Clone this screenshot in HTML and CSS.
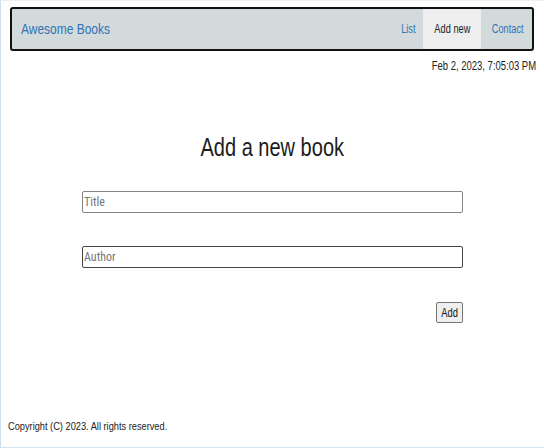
FILE: index.html
```html
<!DOCTYPE html>
<html>
<head>
<meta charset="utf-8">
<link rel="stylesheet" href="styles.css">
</head>
<body>
<header class="topbar">
  <nav class="navbar">
    <a class="brand" href="#"><span class="sq">Awesome Books</span></a>
    <ul class="links">
      <li><a class="link" href="#"><span class="sq">List</span></a></li>
      <li><a class="link active" href="#"><span class="sq">Add new</span></a></li>
      <li><a class="link" href="#"><span class="sq">Contact</span></a></li>
    </ul>
  </nav>
  <p class="date"><span class="sq">Feb 2, 2023, 7:05:03 PM</span></p>
</header>
<main class="content">
  <h1 class="title"><span class="sq">Add a new book</span></h1>
  <form class="form">
    <input class="field" type="text" placeholder="Title">
    <input class="field dark" type="text" placeholder="Author">
    <div class="actions"><button class="btn" type="button"><span class="sq">Add</span></button></div>
  </form>
</main>
<footer class="footer"><span class="sq">Copyright (C) 2023. All rights reserved.</span></footer>
</body>
</html>
```
FILE: styles.css
```css
* { box-sizing: border-box; }
html, body { margin: 0; padding: 0; }
body {
  font-family: "Liberation Sans", Arial, sans-serif;
  color: #222;
  background: #fff;
  width: 544px;
  height: 448px;
  display: flex;
  flex-direction: column;
  border-left: 1px solid #cddff1;
  border-top: 1px solid #eeeeee;
  border-bottom: 1px solid #d3e2f1;
}
.sq {
  display: inline-block;
  white-space: nowrap;
  transform: scaleX(0.78);
  transform-origin: center center;
}
.topbar { padding: 6px 10px 0 9px; }
.navbar {
  display: flex;
  align-items: stretch;
  justify-content: space-between;
  height: 44px;
  background: #d3dadc;
  border: 2px solid #111;
  border-radius: 3px;
}
.brand {
  align-self: center;
  padding-left: 9px;
  color: #2f73b5;
  text-decoration: none;
  font-size: 14px;
}
.brand .sq { transform: scaleX(0.855); transform-origin: left center; }
.links {
  list-style: none;
  display: flex;
  margin: 0;
  padding: 0;
}
.links li { display: flex; }
.link {
  display: flex;
  align-items: center;
  padding: 0 10px;
  font-size: 12px;
  color: #2f73b5;
  text-decoration: none;
}
.link .sq { transform: scaleX(0.77); margin: 0 -5px; }
.links li:nth-child(2) .link { padding: 0 10px 0 11px; }
.links li:last-child .link { padding: 0 9px 0 11px; }
.link.active { background: #eeeeee; color: #222; }
.date {
  margin: 8px -2px 0 0;
  text-align: right;
  font-size: 12px;
  color: #222;
}
.date .sq { transform: scaleX(0.79); transform-origin: right center; }
.content { flex: 1; display: flex; flex-direction: column; align-items: center; }
.title {
  margin: 59px 0 0;
  font-weight: normal;
  font-size: 26px;
  color: #1c1c1c;
}
.title .sq { transform: scaleX(0.77); }
.form {
  width: 381px;
  display: flex;
  flex-direction: column;
  margin-top: 28px;
}
.field {
  height: 22px;
  border: 1px solid #858585;
  border-radius: 2px;
  padding: 0 1px;
  font-family: "Roboto", "Liberation Sans", sans-serif;
  font-stretch: condensed;
  font-size: 12px;
  margin-bottom: 33px;
}
.field.dark { border-color: #444; margin-bottom: 34px; }
.field::placeholder { color: #777; }
.actions { display: flex; justify-content: flex-end; }
.btn {
  width: 27px;
  height: 21px;
  padding: 0;
  font-family: inherit;
  font-size: 12px;
  background: #efefef;
  border: 1px solid #767676;
  border-radius: 2px;
  color: #111;
}
.btn .sq { transform: scaleX(0.78); }
.footer {
  padding: 0 0 15px 7px;
  font-size: 11px;
  color: #222;
}
.footer .sq { transform: scaleX(0.84); transform-origin: left center; }
```
